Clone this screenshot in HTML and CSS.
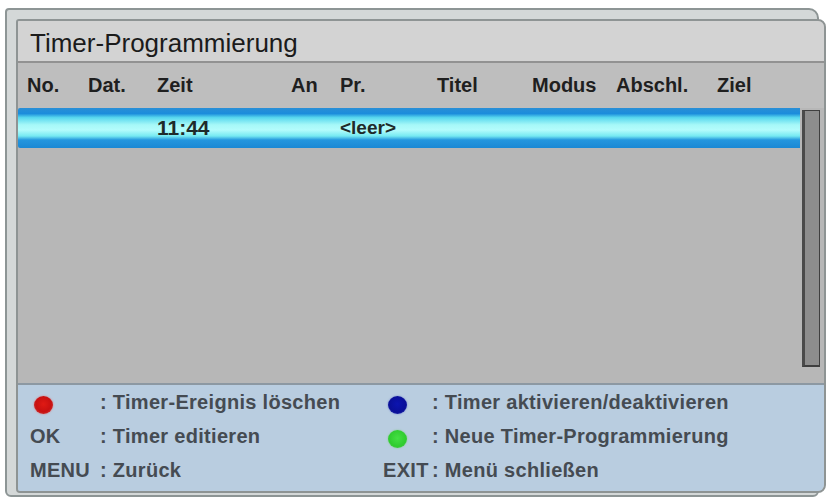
FILE: index.html
```html
<!DOCTYPE html>
<html lang="de">
<head>
<meta charset="utf-8">
<title>Timer-Programmierung</title>
<link rel="stylesheet" href="styles.css">
</head>
<body>
<div class="back">
  <div class="panel">
    <div class="titlebar">Timer-Programmierung</div>
    <div class="cols head">
      <span>No.</span><span>Dat.</span><span>Zeit</span><span>An</span><span>Pr.</span><span>Titel</span><span>Modus</span><span>Abschl.</span><span>Ziel</span>
    </div>
    <div class="listarea">
      <div class="list">
        <div class="cols row sel">
          <span></span><span></span><span>11:44</span><span></span><span class="thin">&lt;leer&gt;</span><span></span><span></span><span></span><span></span>
        </div>
      </div>
      <div class="scroll"></div>
    </div>
    <div class="footer">
      <div class="frow">
        <div class="lhalf"><span class="key"><i class="dot red"></i></span><span class="desc">: Timer-Ereignis löschen</span></div>
        <div class="rhalf"><span class="key"><i class="dot blue"></i></span><span class="desc">: Timer aktivieren/deaktivieren</span></div>
      </div>
      <div class="frow">
        <div class="lhalf"><span class="key">OK</span><span class="desc">: Timer editieren</span></div>
        <div class="rhalf"><span class="key"><i class="dot green"></i></span><span class="desc">: Neue Timer-Programmierung</span></div>
      </div>
      <div class="frow">
        <div class="lhalf"><span class="key">MENU</span><span class="desc">: Zurück</span></div>
        <div class="rhalf"><span class="key">EXIT</span><span class="desc">: Menü schließen</span></div>
      </div>
    </div>
  </div>
</div>
</body>
</html>
```

FILE: styles.css
```css
* { box-sizing: border-box; }
html, body { margin: 0; padding: 0; background: #ffffff; }
body { font-family: "Liberation Sans", Arial, sans-serif; width: 831px; height: 498px; overflow: hidden; }

.back {
  margin: 8px 0 0 5px;
  width: 814px;
  height: 489px;
  border: 2px solid #8d9595;
  border-radius: 4px 10px 6px 6px;
  background: #d4d8d8;
  padding: 9px 0 0 9px;
}

.panel {
  width: 810px;
  height: 474px;
  border: 2px solid #8e9494;
  border-radius: 3px 8px 8px 4px;
  background: #b8b8b8;
  overflow: hidden;
  display: flex;
  flex-direction: column;
}

.titlebar {
  height: 42px;
  flex: none;
  background: #d3d3d3;
  border-bottom: 2px solid #929292;
  padding: 3px 0 0 12px;
  font-size: 26px;
  line-height: 38px;
  color: #1b1b1b;
}

.cols {
  display: grid;
  grid-template-columns: 61px 69px 134px 49px 97px 95px 84px 101px 1fr;
  padding-left: 9px;
  font-weight: bold;
  font-size: 20px;
  color: #1f1f1f;
}

.head {
  height: 45px;
  flex: none;
  background: #bebebe;
  align-items: center;
}

.listarea {
  height: 275px;
  flex: none;
  display: flex;
  background: #b7b7b7;
}
.list { flex: 1; }
.scroll {
  width: 18px;
  height: 257px;
  margin: 2px 4px 0 2px;
  background: #8d8d8d;
  border: 1px solid #3f3f3f;
  border-left: 3px solid #4a4a4a;
  border-bottom: 2px solid #3f3f3f;
}

.row {
  height: 40px;
  align-items: center;
  font-size: 21px;
  color: #1f2a2a;
}
.row .thin { font-size: 19px; }
.sel {
  background: linear-gradient(to bottom,
    #2a8fd6 0%, #1c8ddc 14%, #58d8ee 24%, #a6f8f8 42%, #b4fcfc 55%,
    #76eaf2 70%, #2496de 80%, #1b88d4 100%);
  border-radius: 2px 0 0 2px;
}

.footer {
  flex: 1;
  background: #b9cde0;
  border-top: 2px solid #8c98a2;
  padding-top: 0;
  font-size: 20px;
  letter-spacing: 0.3px;
  font-weight: bold;
  color: #454b52;
}
.frow {
  height: 34px;
  display: flex;
  align-items: center;
}
.lhalf {
  width: 365px;
  padding-left: 12px;
  display: flex;
  align-items: center;
}
.lhalf .key { width: 70px; display: flex; align-items: center; }
.rhalf { display: flex; align-items: center; }
.rhalf .key { width: 49px; display: flex; align-items: center; }

.dot {
  display: inline-block;
  width: 19px;
  height: 18px;
  border-radius: 50%;
  margin-top: 6px;
}
.lhalf .dot { margin-left: 4px; }
.rhalf .dot { margin-left: 5px; }
.red { background: radial-gradient(circle at 50% 45%, #e01a14 0%, #c81010 55%, #d04848 100%); box-shadow: 0 0 2px #e07070; }
.blue { background: radial-gradient(circle at 50% 45%, #0c14b0 0%, #0a0f98 60%, #3a48b8 100%); box-shadow: 0 0 2px #7080d0; }
.green { background: radial-gradient(circle at 50% 45%, #44e044 0%, #30cc30 60%, #58c858 100%); box-shadow: 0 0 2px #80d080; }
```
